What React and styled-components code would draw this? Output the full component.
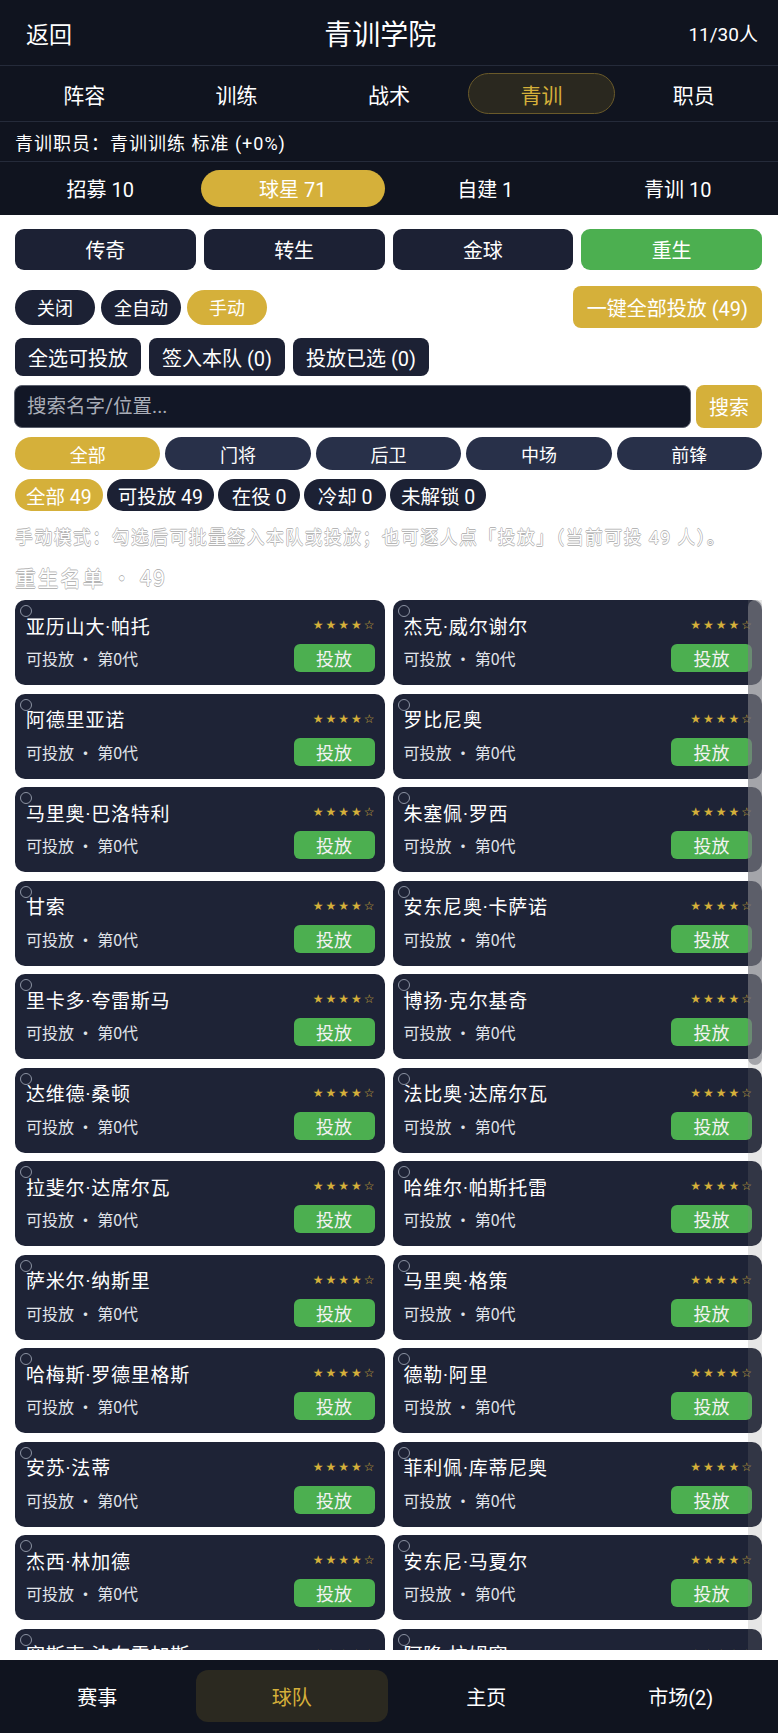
import React from 'react'
import styled, { createGlobalStyle } from 'styled-components'

const GOLD = '#d5b03a'
const NAVY = '#1c2134'
const DARK = '#10141f'
const GREEN = '#4caf50'
const CJK = '"Noto Sans CJK SC", sans-serif'

const GlobalStyle = createGlobalStyle`
  * { box-sizing: border-box; }
  html, body { margin: 0; padding: 0; background: #fff; }
  body {
    font-family: Roboto, "Noto Sans CJK SC", sans-serif;
    color: #fff;
  }
  button, input { font-family: inherit; }
`

const Page = styled.div`
  display: flex;
  flex-direction: column;
  height: 100vh;
  background: #fff;
`

const Header = styled.header`
  display: flex;
  align-items: center;
  justify-content: space-between;
  height: 66px;
  padding: 0 20px 0 26px;
  background: ${DARK};
  border-bottom: 1px solid #252b3a;
`

const BackLink = styled.span`
  font-size: 23px;
`

const Title = styled.h1`
  margin: 0;
  font-size: 28px;
  font-weight: 400;
`

const Count = styled.span`
  font-size: 19px;
`

const TabBar = styled.nav`
  display: grid;
  grid-template-columns: repeat(5, 1fr);
  align-items: center;
  height: 56px;
  padding: 0 8px;
  background: ${DARK};
  border-bottom: 1px solid #252b3a;
`

const Tab = styled.div`
  display: flex;
  align-items: center;
  justify-content: center;
  height: 41px;
  margin: 0 3px;
  border-radius: 21px;
  font-size: 21px;
  color: ${p => (p.$active ? GOLD : '#fff')};
  background: ${p => (p.$active ? '#2a281f' : 'transparent')};
  border: 1px solid ${p => (p.$active ? '#6a5a2a' : 'transparent')};
`

const InfoRow = styled.div`
  display: flex;
  align-items: center;
  height: 40px;
  padding: 0 15px;
  font-size: 18px;
  letter-spacing: 1px;
  background: ${DARK};
  border-bottom: 1px solid #252b3a;
`

const SubTabBar = styled.div`
  display: grid;
  grid-template-columns: repeat(4, 1fr);
  gap: 8px;
  align-items: center;
  height: 53px;
  padding: 0 8px;
  background: ${DARK};
`

const SubTab = styled.div`
  display: flex;
  align-items: center;
  justify-content: center;
  height: 37px;
  border-radius: 19px;
  font-size: 20px;
  background: ${p => (p.$active ? GOLD : 'transparent')};
`

const Content = styled.main`
  flex: 1;
  min-height: 0;
  display: flex;
  flex-direction: column;
  padding: 14px 16px 10px 15px;
  background: #fff;
`

const CategoryRow = styled.div`
  display: grid;
  grid-template-columns: repeat(4, 1fr);
  gap: 8px;
`

const CategoryButton = styled.button`
  height: 41px;
  border: none;
  border-radius: 9px;
  font-size: 20px;
  color: #fff;
  background: ${p => (p.$active ? GREEN : NAVY)};
`

const ModeRow = styled.div`
  display: flex;
  align-items: center;
  justify-content: space-between;
  height: 42px;
  margin-top: 16px;
`

const PillGroup = styled.div`
  display: flex;
  gap: 6px;
`

const ModePill = styled.button`
  min-width: 80px;
  height: 35px;
  padding: 0 13px;
  border: none;
  border-radius: 18px;
  font-size: 18px;
  color: #fff;
  background: ${p => (p.$active ? GOLD : NAVY)};
`

const GoldButton = styled.button`
  height: ${p => p.$h || 42}px;
  padding: 0 ${p => p.$px || 14}px;
  border: none;
  border-radius: 8px;
  font-size: 20px;
  color: #fff;
  background: ${GOLD};
`

const ActionRow = styled.div`
  display: flex;
  gap: 8px;
  margin-top: 10px;
`

const ActionButton = styled.button`
  height: 38px;
  padding: 0 13px;
  border: none;
  border-radius: 8px;
  font-size: 20px;
  color: #fff;
  background: ${NAVY};
`

const SearchRow = styled.div`
  display: flex;
  gap: 5px;
  margin: 9px 0 0 -1px;
`

const SearchInput = styled.input`
  flex: 1;
  height: 43px;
  padding: 0 12px;
  border: 1.5px solid #5b606d;
  border-radius: 8px;
  font-size: 19.5px;
  color: #fff;
  background: #121726;
  outline: none;

  &::placeholder {
    color: #a9adb7;
  }
`

const PositionRow = styled.div`
  display: grid;
  grid-template-columns: repeat(5, 1fr);
  gap: 5px;
  margin-top: 9px;
`

const PositionPill = styled.button`
  height: 33px;
  border: none;
  border-radius: 17px;
  font-size: 18px;
  color: #fff;
  background: ${p => (p.$active ? GOLD : '#283049')};
`

const StatusRow = styled.div`
  display: flex;
  gap: 4px;
  margin-top: 9px;
`

const StatusChip = styled.span`
  display: inline-flex;
  align-items: center;
  justify-content: center;
  min-width: 82px;
  height: 32px;
  padding: 0 11px;
  border-radius: 16px;
  font-size: 19.5px;
  background: ${p => (p.$active ? GOLD : NAVY)};
`

const OutlineText = styled.div`
  color: #fff;
  text-shadow:
    -0.6px 0 #b5b5b5,
    0.6px 0 #b5b5b5,
    0 -0.6px #b5b5b5,
    0 0.6px #b5b5b5;
  white-space: nowrap;
`

const HintText = styled(OutlineText)`
  margin-top: 16px;
  font-size: 18px;
  letter-spacing: 1.3px;
  line-height: 22px;
`

const SectionTitle = styled(OutlineText)`
  margin-top: 16px;
  font-family: ${CJK};
  font-size: 21px;
  letter-spacing: 1.5px;
  line-height: 25px;
`

const ListViewport = styled.div`
  position: relative;
  flex: 1;
  min-height: 0;
  margin-top: 10px;
  overflow: hidden;
`

const CardGrid = styled.div`
  display: grid;
  grid-template-columns: 1fr 1fr;
  column-gap: 8px;
  row-gap: 8.5px;
`

const Card = styled.div`
  position: relative;
  display: flex;
  flex-direction: column;
  gap: 6px;
  height: 85px;
  padding: 12px 10px 13px 11px;
  border-radius: 10px;
  background: #1e2336;
`

const CheckCircle = styled.span`
  position: absolute;
  top: 5px;
  left: 5px;
  width: 12px;
  height: 12px;
  border: 1.5px solid #8c93a3;
  border-radius: 50%;
`

const CardRow = styled.div`
  display: flex;
  align-items: center;
  justify-content: space-between;
  height: ${p => p.$h}px;
`

const Name = styled.span`
  font-size: 19px;
  letter-spacing: 0.8px;
  white-space: nowrap;
`

const Stars = styled.span`
  font-family: "DejaVu Sans", sans-serif;
  font-size: 12px;
  letter-spacing: 2px;
  margin-right: -2px;
  color: ${GOLD};
`

const Meta = styled.span`
  font-family: ${CJK};
  font-size: 16px;
  color: #e1e4ea;
`

const DeployButton = styled.button`
  width: 81px;
  height: 28px;
  border: none;
  border-radius: 6px;
  font-size: 18px;
  color: #f2f2f2;
  background: ${GREEN};
`

const ScrollTrack = styled.div`
  position: absolute;
  top: 0;
  right: 0;
  bottom: 0;
  width: 14px;
  background: rgba(128, 128, 128, 0.2);
`

const ScrollThumb = styled.div`
  height: 465px;
  border-radius: 7px;
  background: rgba(120, 122, 130, 0.6);
`

const BottomNav = styled.nav`
  display: grid;
  grid-template-columns: repeat(4, 1fr);
  height: 73px;
  padding: 10px 0 11px;
  background: ${DARK};
`

const NavItem = styled.div`
  display: flex;
  align-items: center;
  justify-content: center;
  margin: 0 1px;
  border-radius: 12px;
  font-size: 20px;
  color: ${p => (p.$active ? GOLD : '#fff')};
  background: ${p => (p.$active ? '#2b2920' : 'transparent')};
`

const players = [
  '亚历山大·帕托', '杰克·威尔谢尔',
  '阿德里亚诺', '罗比尼奥',
  '马里奥·巴洛特利', '朱塞佩·罗西',
  '甘索', '安东尼奥·卡萨诺',
  '里卡多·夸雷斯马', '博扬·克尔基奇',
  '达维德·桑顿', '法比奥·达席尔瓦',
  '拉斐尔·达席尔瓦', '哈维尔·帕斯托雷',
  '萨米尔·纳斯里', '马里奥·格策',
  '哈梅斯·罗德里格斯', '德勒·阿里',
  '安苏·法蒂', '菲利佩·库蒂尼奥',
  '杰西·林加德', '安东尼·马夏尔',
  '塞斯克·法布雷加斯', '阿隆·拉姆塞',
]

const tabs = ['阵容', '训练', '战术', '青训', '职员']
const subTabs = ['招募 10', '球星 71', '自建 1', '青训 10']
const categories = ['传奇', '转生', '金球', '重生']
const positions = ['全部', '门将', '后卫', '中场', '前锋']
const statuses = ['全部 49', '可投放 49', '在役 0', '冷却 0', '未解锁 0']
const navItems = ['赛事', '球队', '主页', '市场(2)']

export default function App() {
  return (
    <Page>
      <GlobalStyle />
      <Header>
        <BackLink>返回</BackLink>
        <Title>青训学院</Title>
        <Count>11/30人</Count>
      </Header>
      <TabBar>
        {tabs.map(t => (
          <Tab key={t} $active={t === '青训'}>{t}</Tab>
        ))}
      </TabBar>
      <InfoRow>青训职员：青训训练 标准 (+0%)</InfoRow>
      <SubTabBar>
        {subTabs.map(t => (
          <SubTab key={t} $active={t === '球星 71'}>{t}</SubTab>
        ))}
      </SubTabBar>

      <Content>
        <CategoryRow>
          {categories.map(c => (
            <CategoryButton key={c} $active={c === '重生'}>{c}</CategoryButton>
          ))}
        </CategoryRow>

        <ModeRow>
          <PillGroup>
            <ModePill>关闭</ModePill>
            <ModePill>全自动</ModePill>
            <ModePill $active>手动</ModePill>
          </PillGroup>
          <GoldButton $px={14}>一键全部投放 (49)</GoldButton>
        </ModeRow>

        <ActionRow>
          <ActionButton>全选可投放</ActionButton>
          <ActionButton>签入本队 (0)</ActionButton>
          <ActionButton>投放已选 (0)</ActionButton>
        </ActionRow>

        <SearchRow>
          <SearchInput placeholder="搜索名字/位置..." />
          <GoldButton $h={43} $px={13}>搜索</GoldButton>
        </SearchRow>

        <PositionRow>
          {positions.map(p => (
            <PositionPill key={p} $active={p === '全部'}>{p}</PositionPill>
          ))}
        </PositionRow>

        <StatusRow>
          {statuses.map(s => (
            <StatusChip key={s} $active={s === '全部 49'}>{s}</StatusChip>
          ))}
        </StatusRow>

        <HintText>
          手动模式：勾选后可批量签入本队或投放；也可逐人点「投放」（当前可投 49 人）。
        </HintText>
        <SectionTitle>重生名单 · 49</SectionTitle>

        <ListViewport>
          <CardGrid>
            {players.map(name => (
              <Card key={name}>
                <CheckCircle />
                <CardRow $h={26}>
                  <Name>{name}</Name>
                  <Stars>★★★★☆</Stars>
                </CardRow>
                <CardRow $h={28}>
                  <Meta>可投放 · 第0代</Meta>
                  <DeployButton>投放</DeployButton>
                </CardRow>
              </Card>
            ))}
          </CardGrid>
          <ScrollTrack>
            <ScrollThumb />
          </ScrollTrack>
        </ListViewport>
      </Content>

      <BottomNav>
        {navItems.map(n => (
          <NavItem key={n} $active={n === '球队'}>{n}</NavItem>
        ))}
      </BottomNav>
    </Page>
  )
}
